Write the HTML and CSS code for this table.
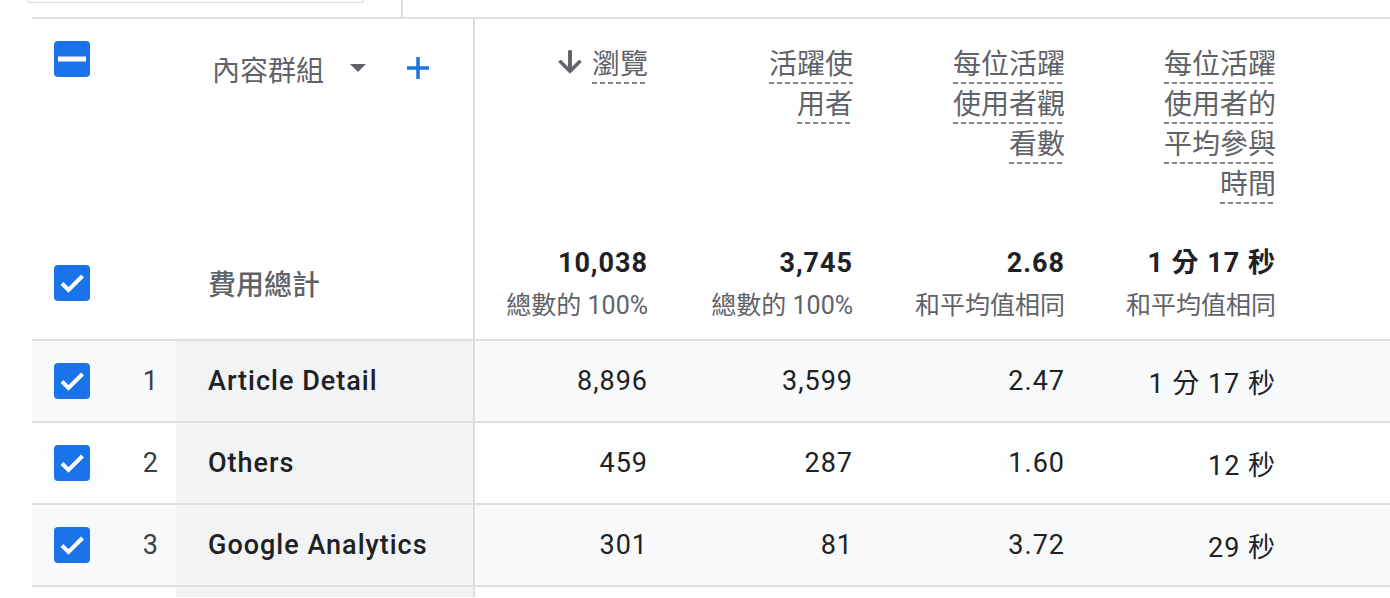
FILE: index.html
```html
<!DOCTYPE html>
<html lang="zh-Hant">
<head>
<meta charset="utf-8">
<title>內容群組</title>
<link rel="stylesheet" href="styles.css">
</head>
<body>
<div class="topbar">
  <div class="search"></div>
  <div class="vsep"></div>
</div>
<div class="table">
  <div class="row head">
    <div class="c-cb top"><svg class="cb" viewBox="0 0 36 36"><rect width="36" height="36" rx="4" fill="#1a73e8"/><rect x="4" y="15.5" width="28" height="5" fill="#fff"/></svg></div>
    <div class="c-dimhead">
      <span class="dimlabel">內容群組</span>
      <svg class="tri" viewBox="0 0 16 8"><polygon points="0,0 16,0 8,8" fill="#5f6368"/></svg>
      <svg class="plus" viewBox="0 0 24 24"><path d="M12 1v22M1 12h22" stroke="#1a73e8" stroke-width="3.5" fill="none"/></svg>
    </div>
    <div class="c-mh"><svg class="arrow" viewBox="0 0 24 24"><path d="M20 12l-1.41-1.41L13 16.17V4h-2v12.17l-5.58-5.59L4 12l8 8 8-8z" fill="#5f6368" stroke="#5f6368" stroke-width="0.7" stroke-linejoin="round"/></svg><div class="hl"><span class="dash">瀏覽</span></div></div>
    <div class="c-mh"><div class="hl w2"><span class="dash">活躍使用者</span></div></div>
    <div class="c-mh"><div class="hl w3"><span class="dash">每位活躍使用者觀看數</span></div></div>
    <div class="c-mh"><div class="hl w3"><span class="dash">每位活躍使用者的平均參與時間</span></div></div>
    <div></div>
  </div>
  <div class="row totals">
    <div class="c-cb"><svg class="cb" viewBox="0 0 36 36"><rect width="36" height="36" rx="4" fill="#1a73e8"/><path d="M8 18.5L14.5 25L28.5 11" stroke="#fff" stroke-width="4" fill="none"/></svg></div>
    <div class="c-dimtotal">費用總計</div>
    <div class="c-mt"><span class="tnum">10,038</span><span class="tsub">總數的 100%</span></div>
    <div class="c-mt"><span class="tnum">3,745</span><span class="tsub">總數的 100%</span></div>
    <div class="c-mt"><span class="tnum">2.68</span><span class="tsub">和平均值相同</span></div>
    <div class="c-mt"><span class="tnum">1 分 17 秒</span><span class="tsub">和平均值相同</span></div>
    <div></div>
  </div>
  <div class="row data odd">
    <div class="c-cb"><svg class="cb" viewBox="0 0 36 36"><rect width="36" height="36" rx="4" fill="#1a73e8"/><path d="M8 18.5L14.5 25L28.5 11" stroke="#fff" stroke-width="4" fill="none"/></svg></div>
    <div class="c-rank">1</div>
    <div class="c-dim">Article Detail</div>
    <div class="c-m">8,896</div>
    <div class="c-m">3,599</div>
    <div class="c-m">2.47</div>
    <div class="c-m">1 分 17 秒</div>
    <div></div>
  </div>
  <div class="row data even">
    <div class="c-cb"><svg class="cb" viewBox="0 0 36 36"><rect width="36" height="36" rx="4" fill="#1a73e8"/><path d="M8 18.5L14.5 25L28.5 11" stroke="#fff" stroke-width="4" fill="none"/></svg></div>
    <div class="c-rank">2</div>
    <div class="c-dim">Others</div>
    <div class="c-m">459</div>
    <div class="c-m">287</div>
    <div class="c-m">1.60</div>
    <div class="c-m">12 秒</div>
    <div></div>
  </div>
  <div class="row data odd">
    <div class="c-cb"><svg class="cb" viewBox="0 0 36 36"><rect width="36" height="36" rx="4" fill="#1a73e8"/><path d="M8 18.5L14.5 25L28.5 11" stroke="#fff" stroke-width="4" fill="none"/></svg></div>
    <div class="c-rank">3</div>
    <div class="c-dim">Google Analytics</div>
    <div class="c-m">301</div>
    <div class="c-m">81</div>
    <div class="c-m">3.72</div>
    <div class="c-m">29 秒</div>
    <div></div>
  </div>
  <div class="row data even short">
    <div class="c-cb"></div>
    <div class="c-rank"></div>
    <div class="c-dim"></div>
    <div class="c-m"></div>
    <div class="c-m"></div>
    <div class="c-m"></div>
    <div class="c-m"></div>
    <div></div>
  </div>
</div>
</body>
</html>
```

FILE: styles.css
```css
html, body {
  margin: 0;
  padding: 0;
  background: #fff;
  overflow: hidden;
}
body {
  font-family: "Roboto", "Noto Sans CJK TC", sans-serif;
  color: #202124;
}
.topbar {
  height: 17px;
  display: flex;
  align-items: flex-start;
}
.search {
  margin-left: 27px;
  width: 335px;
  height: 2px;
  border: 1px solid #dadce0;
  border-top: 0;
  border-radius: 0 0 8px 8px;
}
.vsep {
  margin-left: 37px;
  width: 2px;
  height: 17px;
  background: #dadce0;
}
.table {
  margin-left: 32px;
  border-top: 2px solid #e0e0e0;
}
.row {
  display: grid;
  grid-template-columns: 88px 56px 299px 193px 205px 212px 211px 1fr;
}
.head {
  height: 213px;
}
.totals {
  height: 107px;
  border-bottom: 2px solid #e0e0e0;
}
.data {
  height: 80px;
  border-bottom: 2px solid #e0e0e0;
  align-items: stretch;
}
.data.short {
  height: 10px;
  border-bottom: 0;
}
.odd { background: #f8f9fa; }
.even { background: #fcfdfd; }

.c-cb {
  padding-left: 22px;
  display: flex;
  align-items: center;
}
.c-cb.top {
  align-items: flex-start;
  padding-top: 22px;
}
.cb {
  width: 36px;
  height: 36px;
  display: block;
}

.c-dimhead {
  grid-column: span 2;
  border-right: 2px solid #dadce0;
  display: flex;
  align-items: flex-start;
  padding-top: 30px;
  padding-left: 92px;
}
.dimlabel {
  font-family: "Noto Sans CJK TC", sans-serif;
  font-size: 28px;
  line-height: 40px;
  color: #5f6368;
}
.tri {
  width: 16px;
  height: 8px;
  margin-left: 26px;
  margin-top: 15px;
}
.plus {
  width: 24px;
  height: 24px;
  margin-left: 40px;
  margin-top: 7px;
}

.c-mh {
  display: flex;
  justify-content: flex-end;
  align-items: flex-start;
  padding: 23px 20px 0 0;
}
.arrow {
  width: 34px;
  height: 34px;
  margin-top: 3px;
  margin-right: 5px;
  flex: none;
}
.hl {
  font-family: "Noto Sans CJK TC", sans-serif;
  font-size: 28px;
  line-height: 40px;
  color: #5f6368;
  text-align: right;
}
.hl.w2 { max-width: 100px; }
.hl.w3 { max-width: 124px; }
.dash {
  padding-bottom: 2px;
  background: linear-gradient(90deg, #80868b 0 5px, transparent 5px 8px) repeat-x left bottom / 8px 2px;
  -webkit-box-decoration-break: clone;
  box-decoration-break: clone;
}

.totals .c-cb {
  align-items: flex-start;
  padding-top: 33px;
}
.c-dimtotal {
  grid-column: span 2;
  border-right: 2px solid #dadce0;
  padding-left: 88px;
  padding-top: 31px;
  font-family: "Noto Sans CJK TC", sans-serif;
  font-size: 28px;
  line-height: 40px;
  font-weight: 500;
  color: #5f6368;
}
.c-mt {
  display: flex;
  flex-direction: column;
  align-items: flex-end;
  padding: 13px 20px 0 0;
}
.tnum {
  font-size: 27px;
  font-weight: 700;
  line-height: 36px;
  letter-spacing: 1px;
  color: #202124;
}
.tsub {
  margin-top: 9px;
  font-size: 25px;
  line-height: 32px;
  color: #5f6368;
}

.c-rank {
  display: flex;
  align-items: center;
  justify-content: flex-end;
  padding-right: 18px;
  font-size: 27px;
  color: #3c4043;
}
.c-dim {
  background: #f1f3f4;
  border-right: 2px solid #dadce0;
  display: flex;
  align-items: center;
  padding-left: 32px;
  font-size: 27px;
  font-weight: 500;
  letter-spacing: 1px;
  color: #202124;
}
.c-m {
  display: flex;
  align-items: center;
  justify-content: flex-end;
  padding-right: 20px;
  font-size: 27px;
  letter-spacing: 1px;
  color: #202124;
}
```
